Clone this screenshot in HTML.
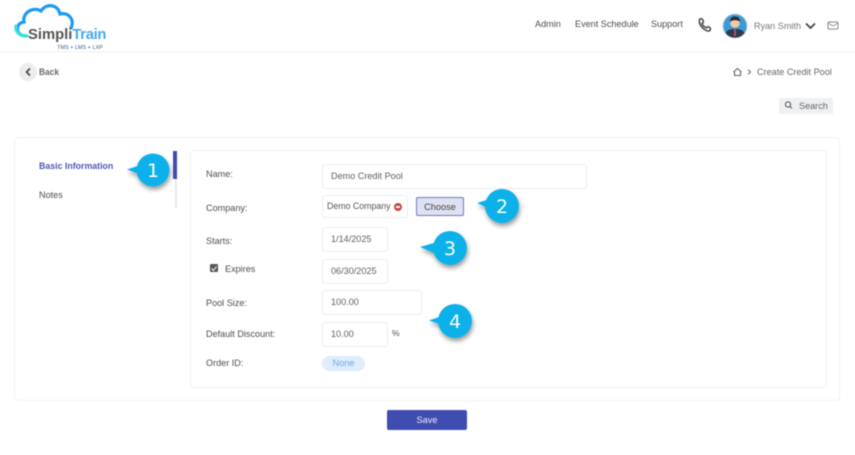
<!DOCTYPE html>
<html><head><meta charset="utf-8"><style>
html,body{margin:0;padding:0;width:855px;height:455px;overflow:hidden;background:#fff}
#p{position:relative;width:855px;height:455px;font-family:"Liberation Sans",sans-serif;color:#555;filter:blur(.45px);overflow:hidden;background:#fff}
#p div{position:absolute;box-sizing:border-box}
.t{font-size:9.1px;line-height:12px;white-space:nowrap;color:#4d4d4d}
.i{background:#fff;border:1px solid #e9ecf1;border-radius:3px;font-size:9.1px;color:#606060;padding-left:8px;white-space:nowrap}
svg{position:absolute;left:0;top:0}
</style></head><body><div id="p">
<div style="left:0;top:51px;width:855px;height:2px;background:#f6f6f7"></div>
<svg width="855" height="455" viewBox="0 0 855 455">
<path d="M25 36C15 35 15 23 24 22C22 13 33 6 41 11C46 3 58 4 60 14C68 12 75 19 71 28" fill="none" stroke="#1e9bf0" stroke-width="3.200" stroke-linecap="round"/>
<path d="M16 26C15 32 20 36 27 36" fill="none" stroke="#35e0e0" stroke-width="3.200" stroke-linecap="round"/>
<text x="28" y="39" font-family="Liberation Sans" font-size="14.800" font-weight="700" fill="#555">Simpli<tspan fill="#45a9f2" font-weight="700" textLength="34">Train</tspan></text>
<text x="57" y="49" font-family="Liberation Sans" font-size="5.500" fill="#33608c">TMS + LMS + LXP</text>
<circle cx="28" cy="72" r="9" fill="#eeeded"/><path d="M30 68.500L26.500 72L30 75.500" fill="none" stroke="#3b4550" stroke-width="1.600"/>
<path d="M699.500 19.500c1.500-1.500 2.800-1 3.500 1s.2 2.300-1 3c.8 2 2.300 3.500 4.500 4.300c.8-1.100 2-1.500 3-.5s1.500 2.500 0 3.500c-3 1.500-11.500-5-10-11.300z" fill="none" stroke="#444" stroke-width="1.500"/>
<circle cx="735" cy="26" r="12" fill="#3a9bd6" stroke="#c8ced6"/>
<path d="M725.500 33c2-3.500 5-4 9.500-4s7.500.5 9.500 4a12 12 0 0 1-19 0z" fill="#2b3a4e"/><circle cx="735" cy="23" r="4.800" fill="#f3c9a5"/><path d="M730 22c0-4 2-5.500 5-5.500s5 1.500 5 5.500c-2-2.500-8-2.500-10 0z" fill="#2b2b33"/><rect x="734.200" y="29" width="1.600" height="7" fill="#d9534f"/>
<path d="M806 23.500L810.500 28L815 23.500" fill="none" stroke="#444" stroke-width="1.800"/>
<rect x="828" y="22" width="10" height="7" rx="1" fill="none" stroke="#888"/><path d="M828 23l5 3l5-3" fill="none" stroke="#888" stroke-width=".8"/>
<path d="M733.500 72l4-3.500l4 3.500M734.500 71.500v4h6v-4" fill="none" stroke="#666" stroke-width="1.100"/>
<path d="M748 69.500L750.500 72L748 74.500" fill="none" stroke="#666" stroke-width="1"/>
</svg>
<div class="t" style="left:39px;top:67px;font-size:9.500px;font-weight:700;color:#666;transform-origin:left;transform:scaleX(.88)">Back</div>
<div class="t" style="left:535px;top:18px">Admin</div>
<div class="t" style="left:575px;top:18px">Event Schedule</div>
<div class="t" style="left:651px;top:18px">Support</div>
<div class="t" style="left:754px;top:20px;color:#777">Ryan Smith</div>
<div class="t" style="left:757px;top:66px;color:#666">Create Credit Pool</div>
<div style="left:779px;top:98px;width:54px;height:16px;background:#eef0f2;border-radius:2px"></div>
<div class="t" style="left:799px;top:100px;color:#666">Search</div>
<svg width="855" height="455" viewBox="0 0 855 455"><circle cx="788" cy="104.500" r="2.600" fill="none" stroke="#555"/><path d="M790 106.500l2 2" stroke="#555"/></svg>

<div style="left:14px;top:137px;width:826px;height:264px;background:#fff;border:1px solid #f0f1f3;border-radius:4px"></div>
<div style="left:190px;top:150px;width:637px;height:238px;background:#fff;border:1px solid #f0f1f3;border-radius:4px"></div>
<div class="t" style="left:39px;top:160px;color:#5057b5;font-weight:700;font-size:8.800px">Basic Information</div>
<div class="t" style="left:39px;top:189px">Notes</div>
<div style="left:175px;top:151px;width:1.500px;height:57px;background:#e6e7f2"></div>
<div style="left:173px;top:151px;width:4px;height:28px;background:#3f4db0"></div>

<div class="t" style="left:206px;top:168px">Name:</div>
<div class="t" style="left:206px;top:202px">Company:</div>
<div class="t" style="left:206px;top:235px">Starts:</div>
<div style="left:210px;top:264px;width:8px;height:8px;background:#555;border-radius:1px"></div>
<svg width="855" height="455" viewBox="0 0 855 455"><path d="M211.500 268.500l2 2l3-4" fill="none" stroke="#fff" stroke-width="1"/></svg>
<div class="t" style="left:225px;top:263px">Expires</div>
<div class="t" style="left:206px;top:297px">Pool Size:</div>
<div class="t" style="left:206px;top:328px">Default Discount:</div>
<div class="t" style="left:206px;top:357px">Order ID:</div>

<div class="i" style="left:322px;top:164px;width:265px;height:25px;line-height:23px">Demo Credit Pool</div>
<div class="i" style="left:322px;top:195px;width:86px;height:23px;line-height:21px;padding-left:4px;color:#555;font-size:8.800px">Demo Company</div>
<div style="left:394px;top:203px;width:8px;height:8px;border-radius:50%;background:#c9433f"></div>
<div style="left:396px;top:206px;width:4px;height:2px;background:#fff"></div>
<div style="left:416px;top:197px;width:48px;height:19px;background:#dfe1f3;border:1px solid #6f78c9;border-radius:2px;font-size:9.200px;line-height:18px;text-align:center;color:#444">Choose</div>
<div class="i" style="left:322px;top:227px;width:66px;height:25px;line-height:23px">1/14/2025</div>
<div class="i" style="left:322px;top:259px;width:66px;height:25px;line-height:23px">06/30/2025</div>
<div class="i" style="left:322px;top:290px;width:100px;height:25px;line-height:23px">100.00</div>
<div class="i" style="left:322px;top:322px;width:66px;height:25px;line-height:23px">10.00</div>
<div class="t" style="left:392px;top:327px;font-size:8.500px">%</div>
<div style="left:322px;top:356px;width:43px;height:15px;background:#deedfb;border-radius:8px;font-size:9.200px;line-height:15px;text-align:center;color:#6fa8e6">None</div>
<div style="left:387px;top:410px;width:80px;height:20px;background:#3f4db0;border-radius:2px;font-size:9.200px;line-height:20px;text-align:center;color:#e8e9f6">Save</div>

<svg width="855" height="455" viewBox="0 0 855 455">
<defs><filter id="s" x="-40%" y="-40%" width="180%" height="180%"><feDropShadow dx="1" dy="3" stdDeviation="2.500" flood-color="#000" flood-opacity=".4"/></filter></defs>
<g filter="url(#s)" fill="#0db1ea">
<path d="M127 169.500L139 165.500L139 174z"/><circle cx="153" cy="170" r="16.500"/>
<path d="M477 203L490 199L490 209z"/><circle cx="502" cy="206" r="17"/>
<path d="M420 247L434 243L434 253z"/><circle cx="450" cy="248" r="17"/>
<path d="M429 320.500L442 316L442 325z"/><circle cx="455" cy="321" r="17"/>
</g>
<g font-family="DejaVu Sans" font-size="19" fill="#fff" text-anchor="middle">
<text x="153" y="177">1</text><text x="502" y="213">2</text><text x="450" y="255">3</text><text x="455" y="328">4</text>
</g></svg>
</div></body></html>
